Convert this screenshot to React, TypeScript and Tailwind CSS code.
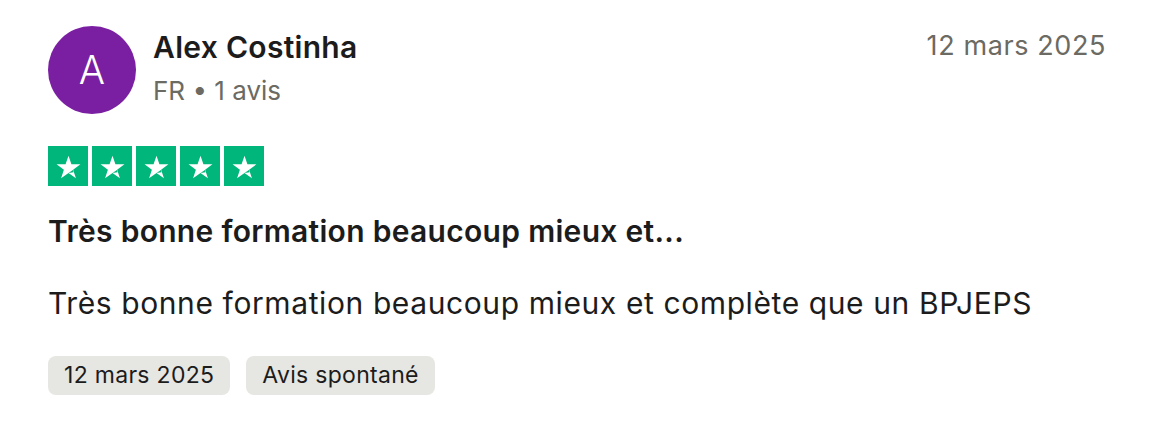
import React from 'react';

const Star: React.FC = () => (
  <div className="w-10 h-10 bg-[#00b67a] flex items-center justify-center">
    <svg viewBox="0 0 24 24" className="w-[27px] h-[27px]">
      <path
        d="M12 2.5l2.6 7.6h8l-6.5 4.7 2.5 7.7L12 17.7l-6.6 4.8 2.5-7.7L1.4 10.1h8z"
        fill="#fff"
      />
      <path d="M15.9 15.2l.6 1.9L12 17.7z" fill="#00b67a" />
    </svg>
  </div>
);

const Tag: React.FC<{ label: string }> = ({ label }) => (
  <span className="h-[39px] px-4 rounded-lg bg-[#e6e6e2] text-[23px] tracking-[0.3px] text-[#1c1c1c] flex items-center">
    {label}
  </span>
);

export default function App() {
  return (
    <div className="w-[1160px] h-[426px] bg-white font-['Inter',sans-serif] text-[#1c1c1c]">
      <div className="pl-12 pr-[54px] pt-[26px]">
        <div className="flex items-start">
          <div className="w-[88px] h-[88px] rounded-full bg-[#7b1fa2] text-white flex items-center justify-center text-[39px] font-light shrink-0">
            A
          </div>
          <div className="ml-[17px] flex-1 pt-[3px]">
            <div className="text-[30px] font-semibold leading-[36px] tracking-[0.3px]">Alex Costinha</div>
            <div className="mt-[10px] text-[26px] leading-[32px] text-[#6b6a63]">FR • 1 avis</div>
          </div>
          <div className="text-[27px] leading-[32px] tracking-[0.6px] text-[#6b6a63] pt-[4px]">12 mars 2025</div>
        </div>

        <div className="mt-8 flex gap-1">
          <Star />
          <Star />
          <Star />
          <Star />
          <Star />
        </div>

        <div className="mt-[27px] text-[30px] font-semibold leading-[36px] tracking-[0.3px]">
          Très bonne formation beaucoup mieux et...
        </div>
        <div className="mt-[36px] text-[30px] leading-[36px] tracking-[0.6px]">
          Très bonne formation beaucoup mieux et complète que un BPJEPS
        </div>

        <div className="mt-[35px] flex gap-4">
          <Tag label="12 mars 2025" />
          <Tag label="Avis spontané" />
        </div>
      </div>
    </div>
  );
}
